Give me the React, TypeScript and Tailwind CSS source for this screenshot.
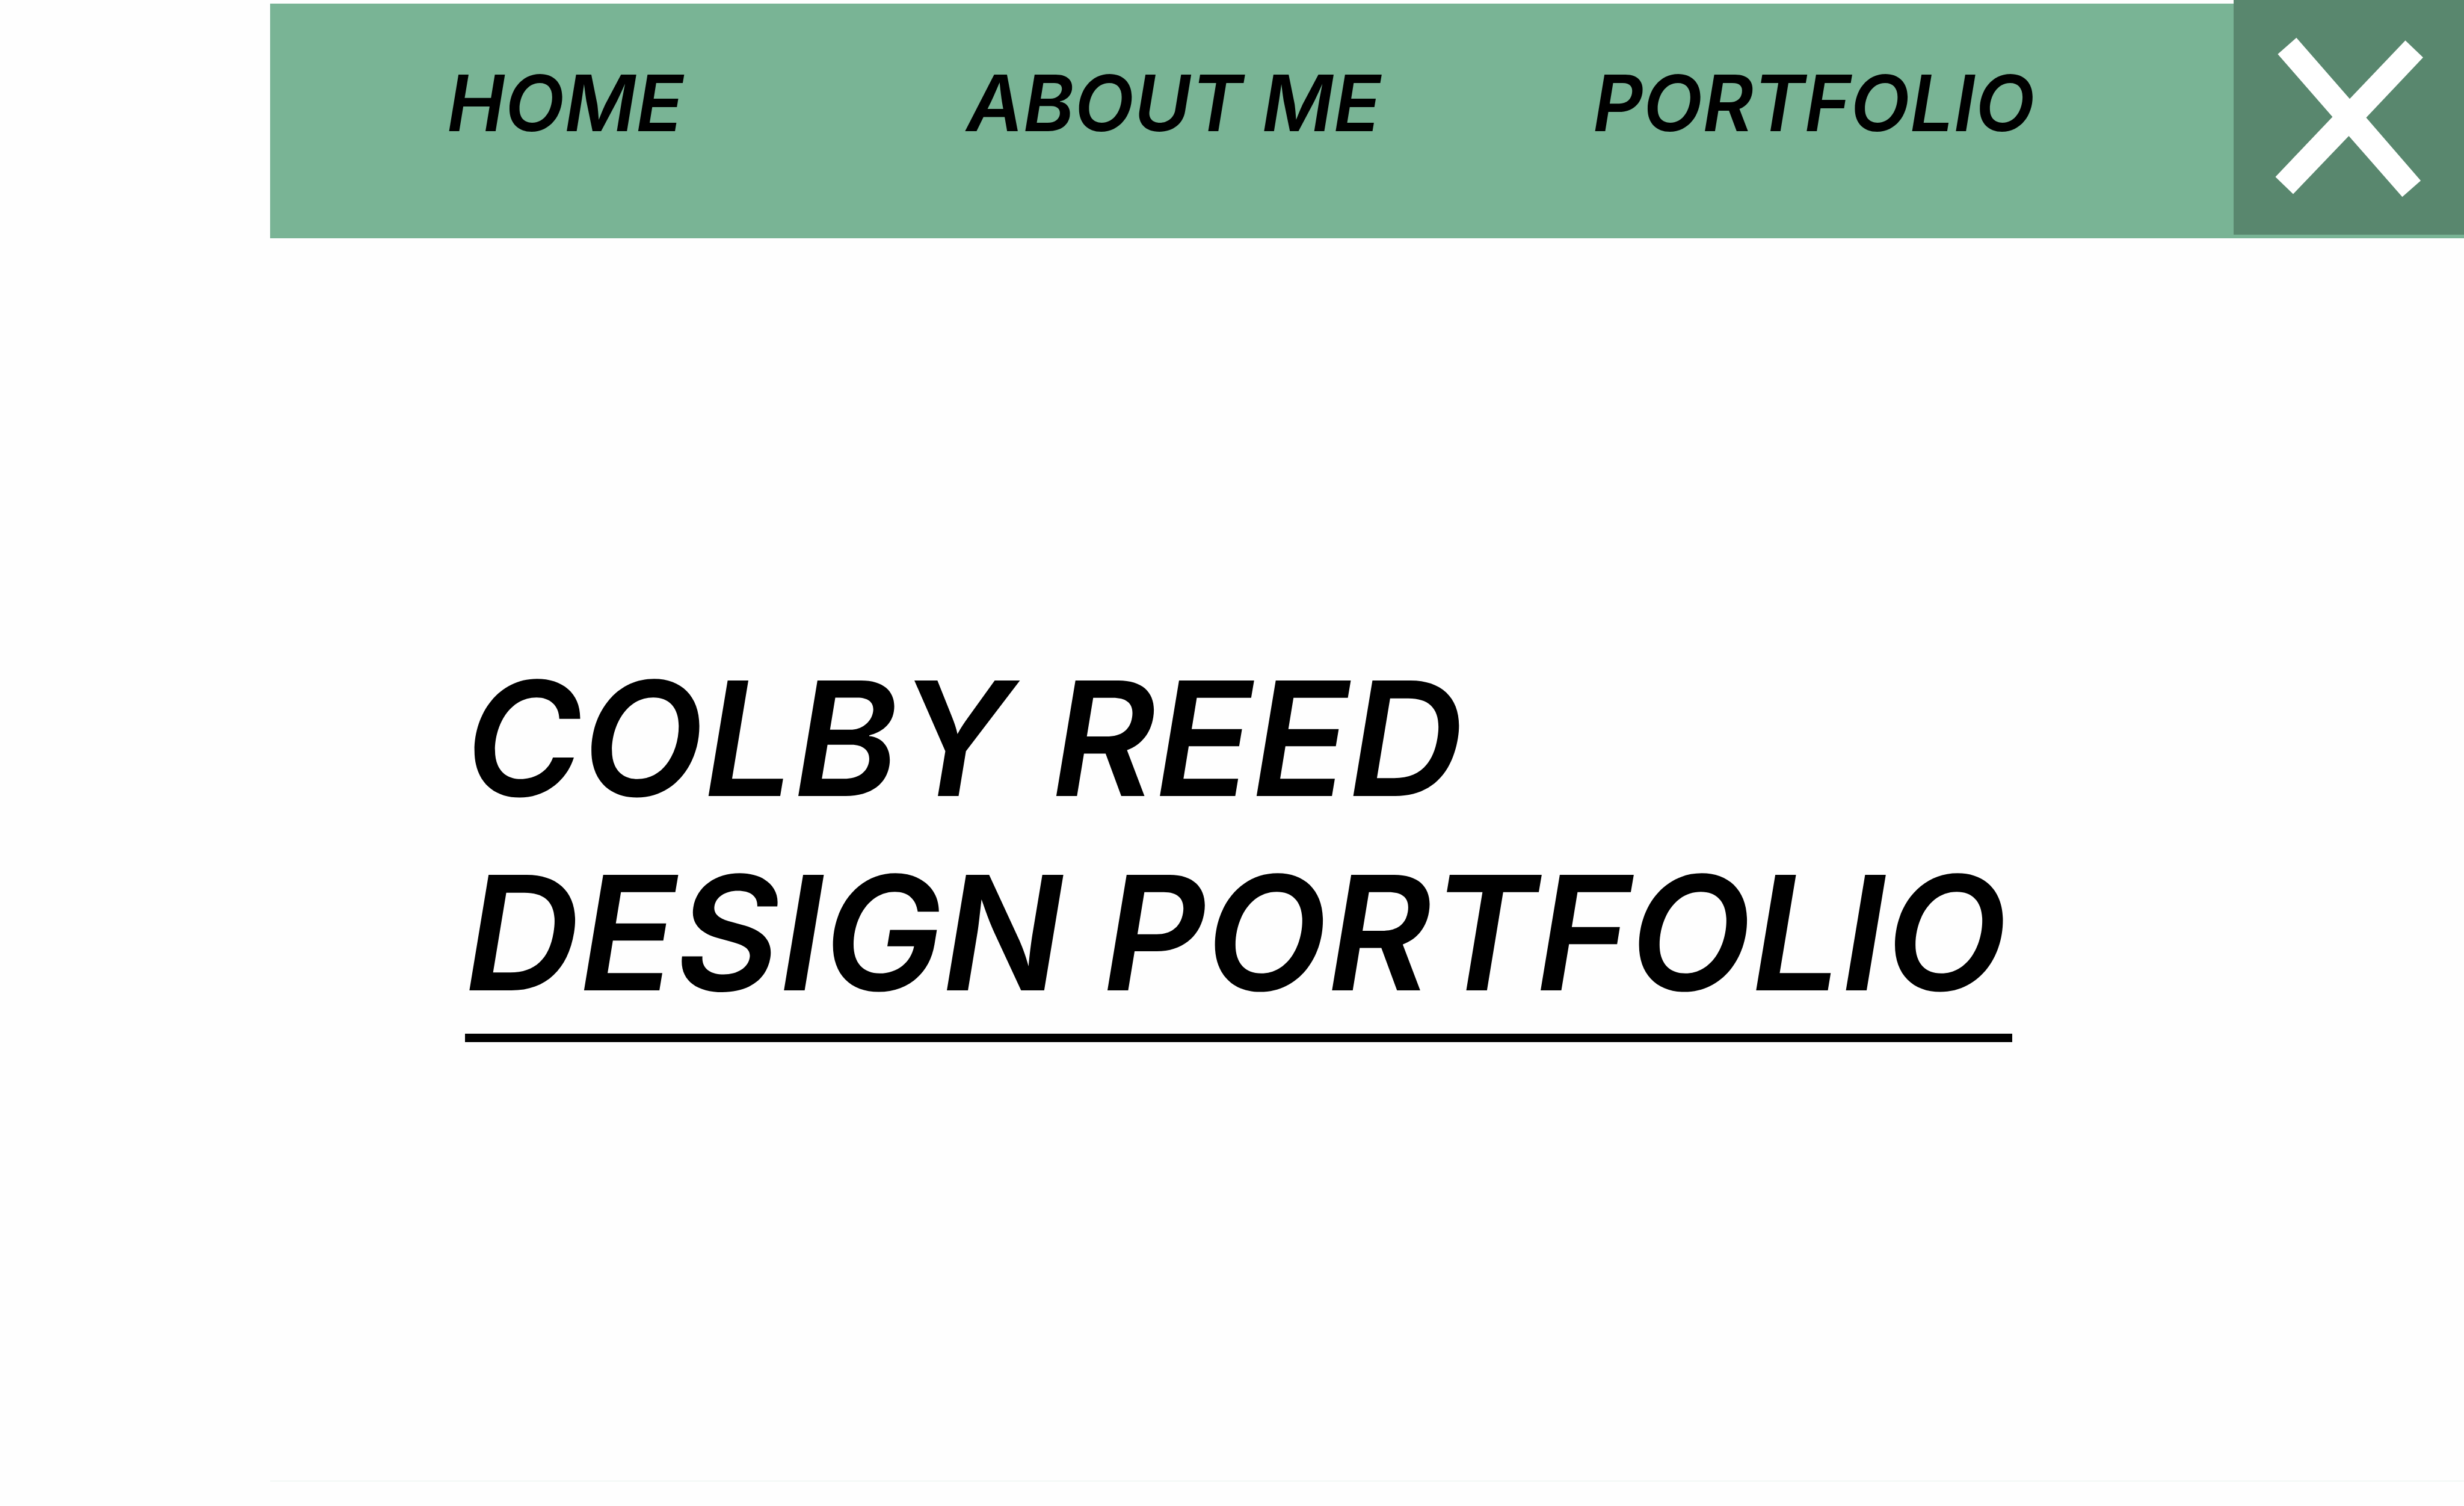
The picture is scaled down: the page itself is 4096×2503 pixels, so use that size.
const links = [
  { label: "HOME", href: "#home" },
  { label: "ABOUT ME", href: "#about" },
  { label: "PORTFOLIO", href: "#portfolio" },
];

function CloseIcon() {
  return (
    <svg viewBox="0 0 383 390" className="block h-[390px] w-full" fill="#ffffff" aria-hidden="true">
      <path d="M104.4 62.7 193 164.3 285.5 67.3 315 95.6 220.4 195.5 311.1 300.3 280.4 327.2 191.5 225.9 99 322.6 69.5 294 164.4 194.2 73.4 89.9Z" />
    </svg>
  );
}

function Header() {
  return (
    <header className="ml-[449px] flex items-start">
      <nav className="mt-[6px] grid h-[390px] flex-1 grid-cols-[864fr_1041fr_1065fr] items-start bg-[#79b495] pt-[87px] pl-[294px] text-[129px] leading-[156px] font-semibold italic">
        {links.map((link) => (
          <a key={link.label} href={link.href} className="whitespace-nowrap">
            {link.label}
          </a>
        ))}
      </nav>
      <div className="w-[383px] bg-[#79b495] pb-[6px]">
        <button type="button" aria-label="Close menu" className="block w-full bg-[#59876e]">
          <CloseIcon />
        </button>
      </div>
    </header>
  );
}

export default function App() {
  return (
    <div className="flex min-h-screen flex-col bg-[#fefefe] font-['Inter',sans-serif] text-black">
      <Header />
      <main className="ml-[449px] flex-1 border-b border-[#e6f1ec] pt-[670px] pl-[324px]">
        <h1 className="w-fit border-b-[14px] border-black pr-[8px] pb-[6px] text-[264px] leading-[323px] font-semibold italic">
          COLBY REED
          <br />
          DESIGN PORTFOLIO
        </h1>
      </main>
      <footer className="h-[41px]" />
    </div>
  );
}
